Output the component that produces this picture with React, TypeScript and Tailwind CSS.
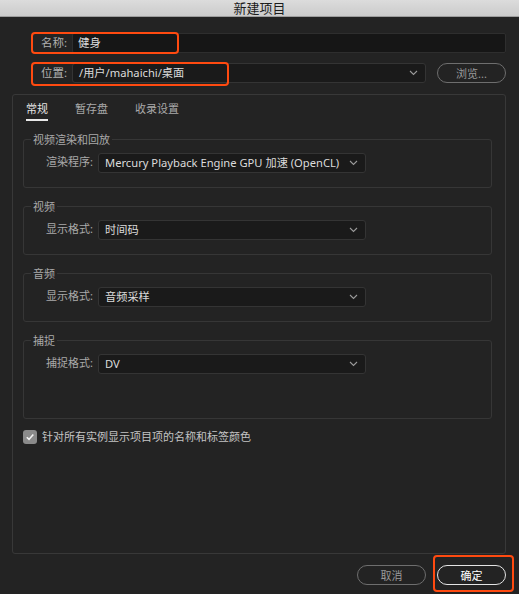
import type { ReactNode } from 'react';

const font = { fontFamily: '"Noto Sans", "Noto Sans CJK SC", sans-serif' };

function Chevron() {
  return (
    <svg width="9" height="6" viewBox="0 0 9 6" className="shrink-0">
      <path d="M1 1l3.5 3.5L8 1" fill="none" stroke="#9a9a9a" strokeWidth="1.1" />
    </svg>
  );
}

function Select({ value, className }: { value: string; className: string }) {
  return (
    <div
      className={`flex h-[20px] items-center justify-between rounded-[3px] border border-[#343434] bg-[#1a1a1a] pl-[6px] pr-[7px] text-[11.2px] text-[#dcdcdc] ${className}`}
    >
      <span className="whitespace-nowrap leading-none">{value}</span>
      <Chevron />
    </div>
  );
}

function Group({ title, label, value, tall }: { title: string; label: string; value: string; tall?: boolean }) {
  return (
    <fieldset className={`rounded-[3px] border border-[#363636] ${tall ? 'pb-[44px]' : 'pb-[14px]'}`}>
      <legend className="ml-[7px] px-[2px] text-[11px] leading-[16px] text-[#a9a9a9]">{title}</legend>
      <div className="mt-[5px] flex items-center">
        <span className="w-[69px] text-right text-[11px] text-[#a9a9a9]">{label}</span>
        <Select value={value} className="ml-[5px] w-[268px]" />
      </div>
    </fieldset>
  );
}

function Highlight({ className }: { className: string }) {
  return <div className={`pointer-events-none absolute rounded-[4px] border-2 border-[#ff4a10] ${className}`} />;
}

function PillButton({ children, primary }: { children: ReactNode; primary?: boolean }) {
  return (
    <button
      className={`flex h-[20px] w-[69px] items-center justify-center rounded-full border text-[11px] leading-none ${
        primary ? 'border-[#e4e4e4] text-white' : 'border-[#6e6e6e] text-[#9a9a9a]'
      }`}
    >
      {children}
    </button>
  );
}

export default function App() {
  return (
    <div className="relative flex h-[594px] w-[519px] flex-col overflow-hidden bg-[#232323]" style={font}>
      <div className="flex h-[17px] items-center justify-center border-b border-[#9d9d9d] bg-gradient-to-b from-[#dcdcdc] to-[#cbcbcb] text-[13px] leading-none text-[#1c1c1c]">
        新建项目
      </div>

      <div className="mt-[16px] flex h-[20px] items-center pl-[41px] pr-[13px]">
        <span className="w-[27px] text-[11.5px] text-[#b0b0b0]">名称:</span>
        <div className="ml-[4px] flex h-[20px] flex-1 items-center rounded-[2px] border border-[#2e2e2e] bg-[#161616] pl-[5px] text-[11.5px] text-[#dcdcdc]">
          健身
        </div>
      </div>

      <div className="mt-[10px] flex h-[20px] items-center pl-[41px] pr-[13px]">
        <span className="w-[27px] text-[11.5px] text-[#b0b0b0]">位置:</span>
        <Select value="/用户/mahaichi/桌面" className="ml-[4px] flex-1" />
        <div className="ml-[11px]">
          <PillButton>浏览...</PillButton>
        </div>
      </div>

      <div className="ml-[12px] mr-[13px] mt-[11px] flex h-[460px] flex-col rounded-[3px] border border-[#383838] px-[10px]">
        <div className="mt-[6px] flex gap-[27px] pl-[3px] text-[11px] text-[#a9a9a9]">
          <span className="border-b-2 border-[#e8e8e8] pb-[1px] text-[#e4e4e4]">常规</span>
          <span>暂存盘</span>
          <span>收录设置</span>
        </div>

        <div className="mt-[11px] mr-[3px] flex flex-col gap-[11px]">
          <Group title="视频渲染和回放" label="渲染程序:" value="Mercury Playback Engine GPU 加速 (OpenCL)" />
          <Group title="视频" label="显示格式:" value="时间码" />
          <Group title="音频" label="显示格式:" value="音频采样" />
          <Group title="捕捉" label="捕捉格式:" value="DV" tall />
        </div>

        <label className="mt-[10px] flex items-center gap-[5px] text-[11px] text-[#c4c4c4]">
          <span className="flex h-[14px] w-[14px] items-center justify-center rounded-[3px] bg-[#8a8a8a]">
            <svg width="10" height="10" viewBox="0 0 10 10">
              <path d="M1.8 5.2l2.2 2.2 4.3-5" fill="none" stroke="#f2f2f2" strokeWidth="1.6" />
            </svg>
          </span>
          针对所有实例显示项目项的名称和标签颜色
        </label>
      </div>

      <div className="mt-[11px] flex justify-end gap-[11px] pr-[13px]">
        <PillButton>取消</PillButton>
        <PillButton primary>确定</PillButton>
      </div>

      <Highlight className="left-[31px] top-[32px] h-[22px] w-[148px]" />
      <Highlight className="left-[31px] top-[62px] h-[24px] w-[198px]" />
      <Highlight className="left-[433px] top-[555px] h-[37px] w-[81px]" />
    </div>
  );
}
